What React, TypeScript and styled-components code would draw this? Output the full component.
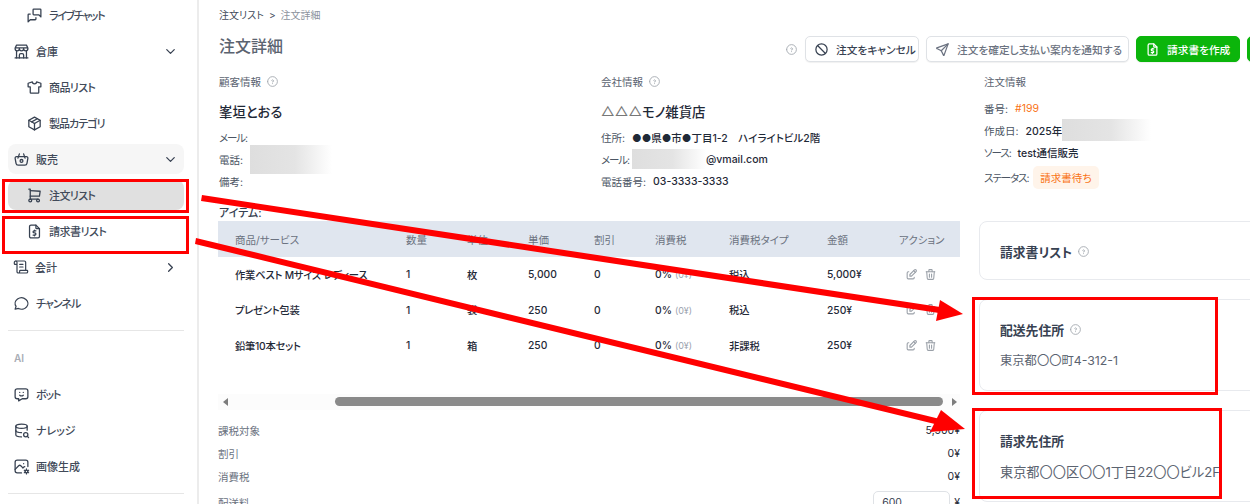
import React from "react";
import styled, { createGlobalStyle } from "styled-components";
import {
  TbMessages, TbBuildingStore, TbShirt, TbPackage, TbBasket, TbShoppingCart, TbFileDollar,
  TbMessageCircle, TbMessageChatbot, TbDatabaseSearch, TbPhotoCog, TbChevronDown,
  TbChevronRight, TbHelpCircle, TbBan, TbSend, TbEdit, TbTrash,
} from "react-icons/tb";
import { ScrollText } from "lucide-react";

const Global = createGlobalStyle`
  html, body { margin: 0; padding: 0; background: #fff; }
  body {
    font-family: "Inter", "Noto Sans CJK JP", sans-serif;
    font-size: 11px;
    font-feature-settings: "palt";
    color: #1f2937;
  }
  * { box-sizing: border-box; }
`;

const Page = styled.div`
  position: relative;
  width: 1250px;
  height: 504px;
  overflow: hidden;
  display: flex;
  background: #fff;
`;

const Sidebar = styled.aside`
  flex: 0 0 199px;
  height: 504px;
  border-right: 2px solid #ececec;
  padding: 0 13px 0 8px;
  overflow: hidden;
`;
const SideList = styled.div`
  margin-top: -3px;
  display: flex;
  flex-direction: column;
`;
const Row = styled.div<{ $sub?: boolean; $open?: boolean; $active?: boolean }>`
  height: 30px;
  margin: 3px 0;
  padding: 0 6px 0 ${(p) => (p.$sub ? 18 : 5)}px;
  display: flex;
  align-items: center;
  gap: 6px;
  border-radius: 8px;
  font-weight: 500;
  color: #414a59;
  background: ${(p) => (p.$active ? "#e0e0e0" : p.$open ? "#f6f6f6" : "transparent")};
  svg { flex: none; color: #374151; }
`;
const RowLabel = styled.span<{ $ls?: number }>`
  flex: 1;
  letter-spacing: ${(p) => p.$ls ?? 0}px;
`;
const SideDivider = styled.hr`
  width: 100%;
  height: 1px;
  margin: 9px 0 0;
  border: 0;
  background: #e6e6e6;
`;
const SideHeading = styled.div`
  height: 36px;
  margin-top: 9px;
  padding-left: 6px;
  display: flex;
  align-items: center;
  font-size: 10px;
  font-weight: 600;
  color: #a9adb5;
`;

const Main = styled.main`
  flex: 0 0 1100px;
  padding: 0 0 0 20px;
`;
const Breadcrumb = styled.div`
  height: 15px;
  margin-top: 7px;
  display: flex;
  align-items: center;
  gap: 5px;
  font-size: 10px;
  color: #414a59;
`;
const Crumb = styled.span`
  color: #8b929c;
`;
const TitleBar = styled.div`
  height: 26px;
  margin-top: 14px;
  display: flex;
  align-items: center;
`;
const Title = styled.h1`
  margin: 0 0 9px;
  flex: 0 0 566px;
  font-size: 16px;
  font-weight: 500;
  color: #5b6370;
`;
const Actions = styled.div`
  display: flex;
  align-items: center;
  gap: 7px;
  svg { flex: none; }
`;
const Help = styled(TbHelpCircle)`
  color: #9aa0a8;
  stroke-width: 1.5;
`;
const Button = styled.div<{ $primary?: boolean; $muted?: boolean; $w: number }>`
  flex: 0 0 ${(p) => p.$w}px;
  height: 26px;
  padding-left: 8px;
  display: flex;
  align-items: center;
  gap: 7px;
  border-radius: 5px;
  font-size: 10.7px;
  font-weight: 500;
  white-space: nowrap;
  color: ${(p) => (p.$primary ? "#fff" : p.$muted ? "#6b7280" : "#374151")};
  background: ${(p) => (p.$primary ? "#0bb50b" : "#fff")};
  border: 1px solid ${(p) => (p.$primary ? "#0bb50b" : "#dfe2e6")};
  box-shadow: 0 1px 1px rgba(0, 0, 0, 0.06);
`;

const InfoGrid = styled.section`
  margin-top: 9px;
  display: grid;
  grid-template-columns: 382px 383px 300px;
`;
const InfoCol = styled.div`
  display: flex;
  flex-direction: column;
`;
const InfoHead = styled.div`
  height: 20px;
  display: flex;
  align-items: center;
  gap: 5px;
  font-size: 10.5px;
  color: #5b6370;
`;
const Name = styled.div`
  height: 24px;
  margin: 8px 0 3px;
  display: flex;
  align-items: center;
  font-size: 13.4px;
  font-weight: 500;
  color: #1f2937;
`;
const Triangles = styled.span`
  color: #777;
  font-weight: 400;
`;
const Info = styled.div<{ $tall?: boolean }>`
  height: ${(p) => (p.$tall ? 27 : 22.3)}px;
  display: flex;
  align-items: center;
  gap: 7px;
  font-size: 10.5px;
  color: #4b5563;
  white-space: nowrap;
`;
const Kana = styled.span<{ $pull?: number }>`
  letter-spacing: -1.1px;
  margin-right: ${(p) => p.$pull ?? -4}px;
`;
const Val = styled.span`
  display: inline-flex;
  align-items: center;
  color: #1f2937;
  font-weight: 500;
`;
const OrderNo = styled.span`
  color: #f97316;
`;
const Blur = styled.span<{ $w: number; $h: number }>`
  display: inline-block;
  width: ${(p) => p.$w}px;
  height: ${(p) => p.$h}px;
  flex: none;
  background: linear-gradient(90deg, #dedede 0%, #e4e4e4 55%, #ffffff 100%);
`;
const Status = styled.span`
  height: 23px;
  margin-left: 2px;
  padding: 0 7px;
  display: inline-flex;
  align-items: center;
  border-radius: 5px;
  background: #fff4ea;
  color: #f97316;
`;
const OrderRows = styled.div`
  margin-top: 6px;
`;

const Lower = styled.section`
  margin-top: 12.6px;
  display: flex;
  align-items: flex-start;
`;
const Left = styled.div`
  flex: 0 0 742px;
  margin-left: -1px;
`;
const ItemsLabel = styled.div`
  height: 16px;
  margin-top: -1px;
  margin-bottom: 1px;
  font-size: 11px;
  font-weight: 500;
  color: #374151;
  padding-left: 1px;
`;
const Header = styled.div`
  height: 36px;
  margin-bottom: -1px;
  background: #e0e6ef;
  display: grid;
  grid-template-columns: 17px 171px 61px 61px 66px 61px 74px 98px 72px 61px;
  align-items: center;
  color: #6b7280;
  font-size: 10.5px;
`;
const TableRow = styled.div`
  height: 35.5px;
  display: grid;
  grid-template-columns: 17px 171px 61px 61px 66px 61px 74px 98px 72px 61px;
  align-items: center;
  font-weight: 500;
  font-size: 10.3px;
  color: #1f2937;
`;
const ItemName = styled.span`
  letter-spacing: -0.25px;
  white-space: nowrap;
`;
const Muted = styled.span`
  color: #9ca3af;
  font-size: 9px;
  font-weight: 400;
  margin-left: 3px;
`;
const RowActions = styled.div`
  display: flex;
  gap: 6px;
  padding-left: 6px;
  color: #9aa0a8;
`;
const Scrollbar = styled.div`
  height: 16px;
  margin-top: 31px;
  background: #fcfcfc;
  display: flex;
  align-items: center;
  padding: 0 3px 0 5px;
`;
const Arrow = styled.span<{ $right?: boolean }>`
  width: 0;
  height: 0;
  border-top: 4px solid transparent;
  border-bottom: 4px solid transparent;
  ${(p) => (p.$right ? "border-left: 5px solid #7d7d7d;" : "border-right: 5px solid #7d7d7d;")}
`;
const Track = styled.div`
  flex: 1;
  margin: 0 9px 0 5px;
  padding-left: 102px;
`;
const Thumb = styled.div`
  height: 9px;
  border-radius: 5px;
  background: #8a8a8a;
`;
const Totals = styled.div`
  margin-top: 9px;
`;
const TotalRow = styled.div`
  height: 23px;
  display: flex;
  align-items: center;
  justify-content: space-between;
  font-size: 10.5px;
  color: #6b7280;
`;
const TotalValue = styled.span`
  color: #1f2937;
`;
const ShipRow = styled(TotalRow)`
  height: 30px;
`;
const ShipValue = styled.div`
  display: flex;
  align-items: center;
  gap: 4px;
`;
const ShipInput = styled.div`
  width: 77px;
  height: 26px;
  margin-top: 3px;
  padding: 4px 8px;
  border: 1px solid #dfe2e6;
  border-radius: 5px;
  color: #374151;
`;

const Right = styled.div`
  flex: 0 0 320px;
  margin-left: 19px;
  margin-top: 16px;
  display: flex;
  flex-direction: column;
  gap: 19px;
`;
const Card = styled.div<{ $h: number }>`
  height: ${(p) => p.$h}px;
  padding: 20px 20px;
  border: 1px solid #e8eaee;
  border-radius: 8px;
`;
const CardTitle = styled.div`
  height: 18px;
  display: flex;
  align-items: center;
  gap: 5px;
  font-size: 12.8px;
  font-weight: 600;
  color: #374151;
`;
const CardText = styled.div<{ $big?: boolean }>`
  margin-top: 13px;
  font-size: ${(p) => (p.$big ? 13.2 : 12.3)}px;
  color: #5b6370;
  white-space: nowrap;
`;

const Annotations = styled.svg`
  position: absolute;
  left: 0;
  top: 0;
  width: 1250px;
  height: 504px;
  pointer-events: none;
`;

const ic = { size: 17, strokeWidth: 1.8 };

const items = [
  ["作業ベスト Mサイズ レディース", "1", "枚", "5,000", "0", "税込", "5,000¥"],
  ["プレゼント包装", "1", "袋", "250", "0", "税込", "250¥"],
  ["鉛筆10本セット", "1", "箱", "250", "0", "非課税", "250¥"],
];

export default function App() {
  return (
    <Page>
      <Global />
      <Sidebar>
        <SideList>
          <Row $sub><TbMessages {...ic} /><RowLabel $ls={-1.4}>ライブチャット</RowLabel></Row>
          <Row><TbBuildingStore {...ic} /><RowLabel>倉庫</RowLabel><TbChevronDown size={15} /></Row>
          <Row $sub><TbShirt {...ic} /><RowLabel $ls={-0.6}>商品リスト</RowLabel></Row>
          <Row $sub><TbPackage {...ic} /><RowLabel $ls={-1}>製品カテゴリ</RowLabel></Row>
          <Row $open><TbBasket {...ic} /><RowLabel>販売</RowLabel><TbChevronDown size={15} /></Row>
          <Row $sub $active><TbShoppingCart {...ic} /><RowLabel $ls={-0.6}>注文リスト</RowLabel></Row>
          <Row $sub><TbFileDollar {...ic} /><RowLabel $ls={-0.5}>請求書リスト</RowLabel></Row>
          <Row><ScrollText size={16} strokeWidth={1.8} /><RowLabel>会計</RowLabel><TbChevronRight size={15} /></Row>
          <Row><TbMessageCircle {...ic} /><RowLabel $ls={-1}>チャンネル</RowLabel></Row>
          <SideDivider />
          <SideHeading>AI</SideHeading>
          <Row><TbMessageChatbot {...ic} /><RowLabel $ls={-1.2}>ボット</RowLabel></Row>
          <Row><TbDatabaseSearch {...ic} /><RowLabel>ナレッジ</RowLabel></Row>
          <Row><TbPhotoCog {...ic} /><RowLabel>画像生成</RowLabel></Row>
          <SideDivider />
        </SideList>
      </Sidebar>
      <Main>
        <Breadcrumb>注文リスト <span>&gt;</span> <Crumb>注文詳細</Crumb></Breadcrumb>
        <TitleBar>
          <Title>注文詳細</Title>
          <Actions>
            <Help size={13} />
            <Button $w={114}><TbBan size={15} />注文をキャンセル</Button>
            <Button $w={203} $muted><TbSend size={15} />注文を確定し支払い案内を通知する</Button>
            <Button $w={104} $primary><TbFileDollar size={15} />請求書を作成</Button>
            <Button $w={40} $primary />
          </Actions>
        </TitleBar>
        <InfoGrid>
          <InfoCol>
            <InfoHead>顧客情報 <Help size={13} /></InfoHead>
            <Name>峯垣とおる</Name>
            <Info><Kana>メール:</Kana></Info>
            <Info>電話: <Blur $w={82} $h={29} /></Info>
            <Info>備考:</Info>
          </InfoCol>
          <InfoCol>
            <InfoHead>会社情報 <Help size={13} /></InfoHead>
            <Name><Triangles>△△△</Triangles>モノ雑貨店</Name>
            <Info>住所: <Val>●●県●市●丁目1-2　ハイライトビル2階</Val></Info>
            <Info><Kana>メール:</Kana> <Val><Blur $w={74} $h={20} />@vmail.com</Val></Info>
            <Info>電話番号: <Val>03-3333-3333</Val></Info>
          </InfoCol>
          <InfoCol>
            <InfoHead>注文情報</InfoHead>
            <OrderRows>
              <Info>番号: <OrderNo>#199</OrderNo></Info>
              <Info>作成日: <Val>2025年<Blur $w={89} $h={22} /></Val></Info>
              <Info><Kana $pull={0}>ソース:</Kana> <Val>test通信販売</Val></Info>
              <Info $tall><Kana>ステータス:</Kana> <Status>請求書待ち</Status></Info>
            </OrderRows>
          </InfoCol>
        </InfoGrid>
        <Lower>
          <Left>
            <ItemsLabel>アイテム:</ItemsLabel>
            <Header>
              <span />
              <span>商品/サービス</span><span>数量</span><span>単位</span><span>単価</span><span>割引</span>
              <span>消費税</span><span>消費税タイプ</span><span>金額</span><span>アクション</span>
            </Header>
            {items.map((r) => (
              <TableRow key={r[0]}>
                <span />
                <ItemName>{r[0]}</ItemName><span>{r[1]}</span><span>{r[2]}</span><span>{r[3]}</span><span>{r[4]}</span>
                <span>0%<Muted>(0¥)</Muted></span>
                <span>{r[5]}</span><span>{r[6]}</span>
                <RowActions><TbEdit size={13} /><TbTrash size={13} /></RowActions>
              </TableRow>
            ))}
            <Scrollbar>
              <Arrow />
              <Track><Thumb /></Track>
              <Arrow $right />
            </Scrollbar>
            <Totals>
              <TotalRow>課税対象<TotalValue>5,500¥</TotalValue></TotalRow>
              <TotalRow>割引<TotalValue>0¥</TotalValue></TotalRow>
              <TotalRow>消費税<TotalValue>0¥</TotalValue></TotalRow>
              <ShipRow>配送料<ShipValue><ShipInput>600</ShipInput><TotalValue>¥</TotalValue></ShipValue></ShipRow>
            </Totals>
          </Left>
          <Right>
            <Card $h={59}><CardTitle>請求書リスト <Help size={13} /></CardTitle></Card>
            <Card $h={92}>
              <CardTitle>配送先住所 <Help size={13} /></CardTitle>
              <CardText>東京都〇〇町4-312-1</CardText>
            </Card>
            <Card $h={92}>
              <CardTitle>請求先住所</CardTitle>
              <CardText $big>東京都〇〇区〇〇1丁目22〇〇ビル2F</CardText>
            </Card>
          </Right>
        </Lower>
      </Main>
      <Annotations viewBox="0 0 1250 504">
        <g fill="none" stroke="#f00" strokeWidth="3">
          <rect x="3.5" y="180.5" width="184" height="31" />
          <rect x="3.5" y="217.5" width="184" height="35" />
          <rect x="973.5" y="298.5" width="243" height="95" />
          <rect x="973.5" y="409.5" width="247" height="88" />
        </g>
        <g fill="#f00" stroke="none">
          <polygon points="202,195 940,307 939,313 201,201" />
          <polygon points="940,300 963,314 936,321" />
          <polygon points="196,238 940,419 939,425 195,244" />
          <polygon points="941,410 965,429 930,432" />
        </g>
      </Annotations>
    </Page>
  );
}
